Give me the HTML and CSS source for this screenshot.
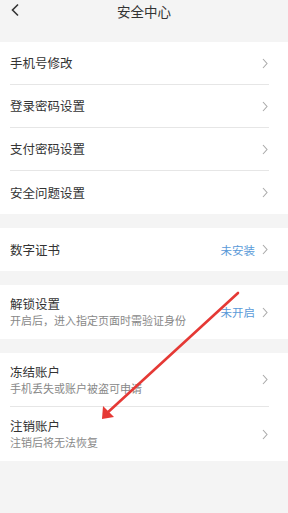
FILE: index.html
```html
<!DOCTYPE html>
<html lang="zh">
<head>
<meta charset="utf-8">
<link rel="stylesheet" href="styles.css">
</head>
<body>
<div class="page">
  <header class="nav">
    <svg class="back" width="10" height="14" viewBox="0 0 10 14"><path d="M8 1.5 L2.5 7 L8 12.5" fill="none" stroke="#333" stroke-width="1.6"/></svg>
    <div class="title">安全中心</div>
  </header>

  <section class="group first">
    <div class="row"><span class="label">手机号修改</span><svg class="chev" width="6" height="11" viewBox="0 0 6 11"><path d="M1 1 L5 5.5 L1 10" fill="none" stroke="#aaa" stroke-width="1.1"/></svg></div>
    <div class="row"><span class="label">登录密码设置</span><svg class="chev" width="6" height="11" viewBox="0 0 6 11"><path d="M1 1 L5 5.5 L1 10" fill="none" stroke="#aaa" stroke-width="1.1"/></svg></div>
    <div class="row"><span class="label">支付密码设置</span><svg class="chev" width="6" height="11" viewBox="0 0 6 11"><path d="M1 1 L5 5.5 L1 10" fill="none" stroke="#aaa" stroke-width="1.1"/></svg></div>
    <div class="row last"><span class="label">安全问题设置</span><svg class="chev" width="6" height="11" viewBox="0 0 6 11"><path d="M1 1 L5 5.5 L1 10" fill="none" stroke="#aaa" stroke-width="1.1"/></svg></div>
  </section>

  <section class="group">
    <div class="row last"><span class="label">数字证书</span><span class="value">未安装</span><svg class="chev" width="6" height="11" viewBox="0 0 6 11"><path d="M1 1 L5 5.5 L1 10" fill="none" stroke="#aaa" stroke-width="1.1"/></svg></div>
  </section>

  <section class="group">
    <div class="row tall last">
      <div class="texts"><span class="label">解锁设置</span><span class="sub">开启后，进入指定页面时需验证身份</span></div>
      <span class="value">未开启</span><svg class="chev" width="6" height="11" viewBox="0 0 6 11"><path d="M1 1 L5 5.5 L1 10" fill="none" stroke="#aaa" stroke-width="1.1"/></svg>
    </div>
  </section>

  <section class="group">
    <div class="row tall">
      <div class="texts"><span class="label">冻结账户</span><span class="sub">手机丢失或账户被盗可申请</span></div>
      <svg class="chev" width="6" height="11" viewBox="0 0 6 11"><path d="M1 1 L5 5.5 L1 10" fill="none" stroke="#aaa" stroke-width="1.1"/></svg>
    </div>
    <div class="row tall last">
      <div class="texts"><span class="label">注销账户</span><span class="sub">注销后将无法恢复</span></div>
      <svg class="chev" width="6" height="11" viewBox="0 0 6 11"><path d="M1 1 L5 5.5 L1 10" fill="none" stroke="#aaa" stroke-width="1.1"/></svg>
    </div>
  </section>

  <svg class="arrow" width="288" height="513" viewBox="0 0 288 513">
    <line x1="238" y1="293" x2="106" y2="414" stroke="#e53935" stroke-width="2.6" stroke-linecap="round"/>
    <polygon points="102,419 103,406 114,417" fill="#e53935"/>
  </svg>
</div>
</body>
</html>
```
FILE: styles.css
```css
* { box-sizing: border-box; }
html, body { margin: 0; padding: 0; }
body {
  background: #f4f4f4;
  font-family: "Noto Sans CJK SC", "Noto Sans", sans-serif;
  color: #333;
}
.page { position: relative; width: 288px; height: 513px; overflow: hidden; }
.nav {
  height: 42px;
  position: relative;
  display: flex;
  justify-content: center;
  align-items: flex-start;
}
.back { position: absolute; left: 10px; top: 3px; }
.title { font-size: 13.5px; line-height: 22px; color: #333; }
.group { background: #fff; margin-top: 14px; }
.group.first { margin-top: 0; }
.row {
  height: 43px;
  margin-left: 10px;
  margin-right: 19px;
  display: flex;
  align-items: center;
  border-bottom: 1px solid #e6e6e6;
}
.row.last { border-bottom: none; }
.row.tall { height: 54px; }
.label { font-size: 12.5px; color: #333; flex: 1; line-height: 16px; }
.texts { flex: 1; display: flex; flex-direction: column; }
.texts .label { flex: none; }
.sub { font-size: 11px; color: #888; line-height: 15px; margin-top: 1px; }
.value { font-size: 11.5px; color: #5a9ad8; margin-right: 7px; }
.chev { display: block; margin-right: 1px; }
.arrow { position: absolute; left: 0; top: 0; pointer-events: none; }
```
